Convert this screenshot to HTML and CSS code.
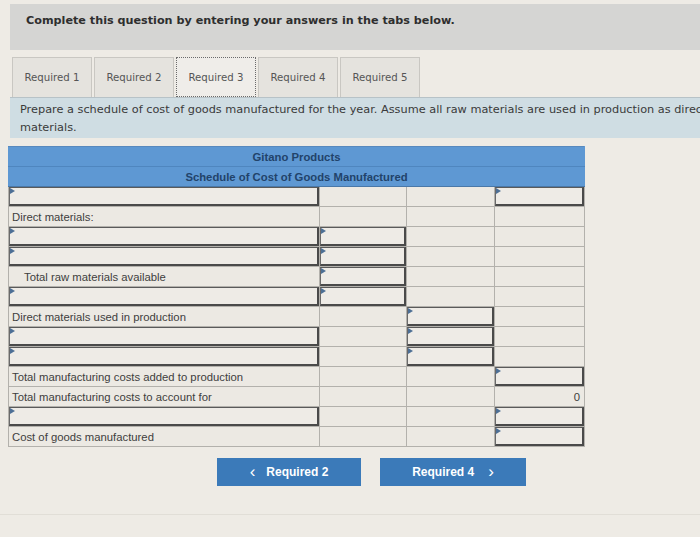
FILE: index.html
```html
<!DOCTYPE html>
<html>
<head>
<meta charset="utf-8">
<link rel="stylesheet" href="styles.css">
</head>
<body>
<div class="page">
  <div class="banner">Complete this question by entering your answers in the tabs below.</div>
  <div class="tabs">
    <div class="tab">Required 1</div>
    <div class="tab">Required 2</div>
    <div class="tab active">Required 3</div>
    <div class="tab">Required 4</div>
    <div class="tab">Required 5</div>
  </div>
  <div class="prompt">Prepare a schedule of cost of goods manufactured for the year. Assume all raw materials are used in production as direct materials.</div>
  <table class="sched">
    <colgroup><col class="c1"><col class="c2"><col class="c3"><col class="c4"></colgroup>
    <thead>
      <tr><th colspan="4" class="h1">Gitano Products</th></tr>
      <tr><th colspan="4" class="h2">Schedule of Cost of Goods Manufactured</th></tr>
    </thead>
    <tbody>
      <tr><td class="in"><span class="box"></span></td><td></td><td></td><td class="in"><span class="box"></span></td></tr>
      <tr><td>Direct materials:</td><td></td><td></td><td></td></tr>
      <tr><td class="in"><span class="box"></span></td><td class="in"><span class="box"></span></td><td></td><td></td></tr>
      <tr><td class="in"><span class="box"></span></td><td class="in"><span class="box"></span></td><td></td><td></td></tr>
      <tr><td class="indent">Total raw materials available</td><td class="in"><span class="box"></span></td><td></td><td></td></tr>
      <tr><td class="in"><span class="box"></span></td><td class="in"><span class="box"></span></td><td></td><td></td></tr>
      <tr><td>Direct materials used in production</td><td></td><td class="in"><span class="box"></span></td><td></td></tr>
      <tr><td class="in"><span class="box"></span></td><td></td><td class="in"><span class="box"></span></td><td></td></tr>
      <tr><td class="in"><span class="box"></span></td><td></td><td class="in"><span class="box"></span></td><td></td></tr>
      <tr><td>Total manufacturing costs added to production</td><td></td><td></td><td class="in"><span class="box"></span></td></tr>
      <tr><td>Total manufacturing costs to account for</td><td></td><td></td><td class="num">0</td></tr>
      <tr><td class="in"><span class="box"></span></td><td></td><td></td><td class="in"><span class="box"></span></td></tr>
      <tr><td>Cost of goods manufactured</td><td></td><td></td><td class="in"><span class="box"></span></td></tr>
    </tbody>
  </table>
  <div class="nav">
    <button class="btn prev"><span class="chev">&lsaquo;</span>Required 2</button>
    <button class="btn next">Required 4<span class="chev">&rsaquo;</span></button>
  </div>
  <div class="foot"></div>
</div>
</body>
</html>
```
FILE: styles.css
```css
html, body {
  margin: 0;
  padding: 0;
  overflow: hidden;
  background: #eeebe5;
}
.page {
  width: 700px;
  height: 537px;
  overflow: hidden;
  position: relative;
  font-family: "DejaVu Sans", Verdana, sans-serif;
}
.banner {
  margin: 4px 0 0 10px;
  height: 46px;
  width: 720px;
  box-sizing: border-box;
  background: #d5d5d3;
  padding: 10px 0 0 16px;
  font-size: 11.2px;
  font-weight: bold;
  color: #2e2e2e;
}
.tabs {
  display: flex;
  gap: 2px;
  margin: 7px 0 0 12px;
  height: 40px;
}
.tab {
  width: 80px;
  box-sizing: border-box;
  background: #e5e3de;
  border: 1px solid #c9c7c2;
  border-bottom: none;
  font-size: 10.2px;
  color: #555;
  text-align: center;
  line-height: 40px;
}
.tab.active {
  background: #efede9;
  border: 1px dotted #6b6b6b;
}
.prompt {
  margin-left: 10px;
  width: 745px;
  box-sizing: border-box;
  height: 41px;
  background: #cfdde3;
  border-top: 1px solid #b7c2c7;
  padding: 3px 0 0 10px;
  font-size: 11.3px;
  line-height: 18px;
  color: #3a3a3a;
}
.sched {
  margin: 8px 0 0 8px;
  border-collapse: collapse;
  table-layout: fixed;
  width: 577px;
  font-family: "Liberation Sans", Arial, sans-serif;
}
.c1 { width: 311px; }
.c2 { width: 87px; }
.c3 { width: 88px; }
.c4 { width: 90px; }
.sched th {
  background: #5e98d3;
  color: #22436a;
  font-size: 11.3px;
  font-weight: bold;
  height: 19px;
  padding: 0;
  border-left: 1px solid #5e98d3;
  border-right: 1px solid #5e98d3;
}
.sched th.h1 {
  border-top: 1px solid #5889be;
  border-bottom: 1px solid #4f86bf;
}
.sched th.h2 {
  border-bottom: 1px solid #4a78a8;
}
.sched td {
  height: 19px;
  padding: 0 3px 0 3px;
  border: 1px solid #b3b1ac;
  background: #ece9e3;
  font-size: 11.3px;
  color: #404040;
  white-space: nowrap;
  overflow: hidden;
  line-height: 18px;
}
.sched td.indent { padding-left: 15px; }
.sched td.num { text-align: right; padding-right: 4px; }
.sched td.in {
  padding: 0;
  position: relative;
}
.box {
  display: block;
  position: relative;
  height: 19px;
  box-sizing: border-box;
  border-top: 1px solid #5a5a5a;
  border-left: 1px solid #6a6a6a;
  border-right: 2px solid #4a4a4a;
  border-bottom: 2px solid #4a4a4a;
  background: #eeebe6;
}
.box::before {
  content: "";
  position: absolute;
  left: 0;
  top: 0;
  border-left: 5px solid #4d6f95;
  border-top: 3px solid transparent;
  border-bottom: 3px solid transparent;
}
.nav {
  display: flex;
  gap: 19px;
  margin: 11px 0 0 217px;
}
.btn {
  height: 28px;
  border: none;
  background: #3b7ab9;
  color: #fff;
  font-family: "Liberation Sans", Arial, sans-serif;
  font-size: 12px;
  font-weight: bold;
  padding: 0;
  display: flex;
  align-items: center;
  justify-content: center;
}
.btn.prev { width: 144px; }
.btn.next { width: 146px; }
.chev {
  font-size: 17px;
  font-weight: normal;
  line-height: 1;
  margin-top: -2px;
}
.prev .chev { margin-right: 11px; }
.next .chev { margin-left: 14px; }
.foot {
  margin-top: 28px;
  border-top: 1px solid #e1ded7;
}
```
